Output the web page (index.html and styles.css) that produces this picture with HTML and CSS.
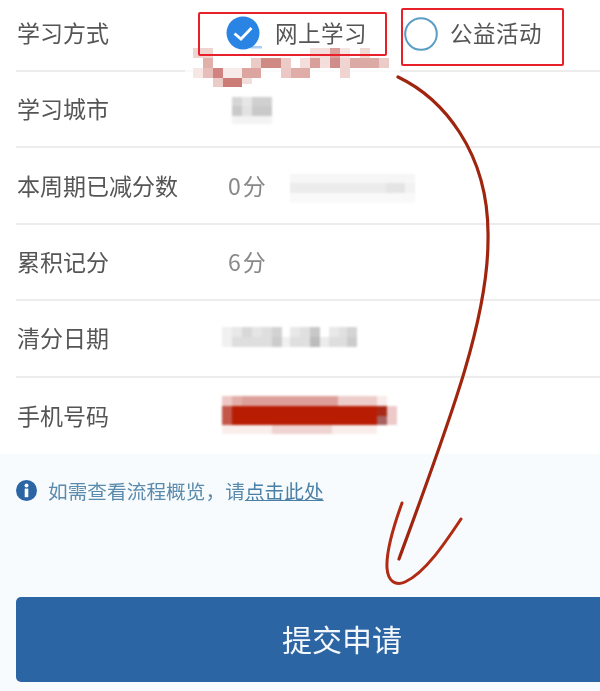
FILE: index.html
```html
<!DOCTYPE html>
<html>

<head>
    <meta charset="utf-8" />
    <title>学习方式</title>
    <meta name="viewport" content="width=device-width, initial-scale=1">
    <link rel="stylesheet" href="styles.css">
</head>

<body>
    <div class="page">
        <div class="form">
            <div class="row">
                <span class="label">学习方式</span>
                <div class="options">
                    <div class="option option-online">
                        <svg class="radio" width="34" height="34" viewBox="0 0 34 34">
                            <circle cx="17" cy="17" r="16.5" fill="#2a84e4" />
                            <path d="M8.5 17.5 L15 23 L25.5 12" fill="none" stroke="#fff" stroke-width="2.8" />
                        </svg>
                        <span class="option-text">网上学习</span>
                    </div>
                    <div class="option option-charity">
                        <svg class="radio" width="34" height="34" viewBox="0 0 34 34">
                            <circle cx="17" cy="17" r="15.8" fill="#fff" stroke="#5a9cc4" stroke-width="2" />
                        </svg>
                        <span class="option-text">公益活动</span>
                    </div>
                </div>
            </div>
            <div class="row">
                <span class="label">学习城市</span>
                <svg class="mosaic mosaic-city" width="40" height="27" viewBox="0 0 40 27">
                    <rect x="0" y="0" width="10" height="9" fill="#d6d6d6" />
                    <rect x="10" y="0" width="10" height="9" fill="#e6e6e6" />
                    <rect x="20" y="0" width="20" height="9" fill="#d0d0d0" />
                    <rect x="0" y="9" width="10" height="10" fill="#cacaca" />
                    <rect x="10" y="9" width="10" height="10" fill="#e2e2e2" />
                    <rect x="20" y="9" width="20" height="10" fill="#c9c9c9" />
                    <rect x="0" y="19" width="40" height="8" fill="#f3f3f3" />
                </svg>
            </div>
            <div class="row">
                <span class="label">本周期已减分数</span>
                <span class="value">0分</span>
                <svg class="mosaic mosaic-note" width="125" height="29" viewBox="0 0 125 29">
                    <rect x="0" y="0" width="125" height="9" fill="#f6f6f6" />
                    <rect x="0" y="9" width="125" height="10" fill="#ececec" />
                    <rect x="96" y="9" width="19" height="10" fill="#e4e4e4" />
                    <rect x="115" y="9" width="10" height="10" fill="#f2f2f2" />
                    <rect x="0" y="19" width="125" height="10" fill="#f9f9f9" />
                </svg>
            </div>
            <div class="row">
                <span class="label">累积记分</span>
                <span class="value">6分</span>
            </div>
            <div class="row">
                <span class="label">清分日期</span>
                <svg class="mosaic mosaic-date" width="135" height="20" viewBox="0 0 135 20">
                    <rect x="0" y="0" width="10" height="10" fill="#f0f0f0" />
                    <rect x="10" y="0" width="10" height="10" fill="#e8e8e8" />
                    <rect x="20" y="0" width="10" height="10" fill="#d8d8d8" />
                    <rect x="30" y="0" width="10" height="10" fill="#e5e5e5" />
                    <rect x="40" y="0" width="10" height="10" fill="#dedede" />
                    <rect x="50" y="0" width="10" height="10" fill="#d2d2d2" />
                    <rect x="68" y="0" width="10" height="10" fill="#e8e8e8" />
                    <rect x="78" y="0" width="10" height="10" fill="#e0e0e0" />
                    <rect x="88" y="0" width="10" height="10" fill="#c8c8c8" />
                    <rect x="107" y="0" width="10" height="10" fill="#e8e8e8" />
                    <rect x="117" y="0" width="10" height="10" fill="#e0e0e0" />
                    <rect x="125" y="0" width="10" height="10" fill="#d4d4d4" />
                    <rect x="0" y="10" width="10" height="10" fill="#f0f0f0" />
                    <rect x="10" y="10" width="40" height="10" fill="#dedede" />
                    <rect x="50" y="10" width="10" height="10" fill="#cccccc" />
                    <rect x="60" y="10" width="8" height="10" fill="#f0f0f0" />
                    <rect x="68" y="10" width="20" height="10" fill="#dfdfdf" />
                    <rect x="88" y="10" width="10" height="10" fill="#bcbcbc" />
                    <rect x="98" y="10" width="9" height="10" fill="#ececec" />
                    <rect x="107" y="10" width="18" height="10" fill="#dedede" />
                    <rect x="125" y="10" width="10" height="10" fill="#cccccc" />
                </svg>
            </div>
            <div class="row">
                <span class="label">手机号码</span>
                <svg class="mosaic mosaic-phone" width="175" height="38" viewBox="0 0 175 38">
                    <rect x="0" y="0" width="10" height="10" fill="#edc8c4" />
                    <rect x="10" y="0" width="10" height="10" fill="#e4aea8" />
                    <rect x="20" y="0" width="96" height="10" fill="#dd9f99" />
                    <rect x="116" y="0" width="39" height="10" fill="#eccdc9" />
                    <rect x="155" y="0" width="10" height="10" fill="#f8ecea" />
                    <rect x="0" y="10" width="10" height="19" fill="#c2574a" />
                    <rect x="10" y="10" width="145" height="19" fill="#b81c02" />
                    <rect x="155" y="10" width="10" height="10" fill="#a82a16" />
                    <rect x="155" y="20" width="10" height="9" fill="#a86060" />
                    <rect x="165" y="10" width="10" height="19" fill="#eccaca" />
                    <rect x="0" y="29" width="50" height="9" fill="#f9eeec" />
                    <rect x="50" y="29" width="60" height="9" fill="#efd4d1" />
                    <rect x="110" y="29" width="45" height="9" fill="#f9eeec" />
                </svg>
            </div>
        </div>

        <div class="footer">
            <div class="tip">
                <svg class="tip-icon" width="21" height="21" viewBox="0 0 21 21">
                    <circle cx="10.5" cy="10.5" r="10.5" fill="#2b65a4" />
                    <circle cx="10.5" cy="5.4" r="2" fill="#fff" />
                    <rect x="8.7" y="8.6" width="3.6" height="8.6" fill="#fff" />
                </svg>
                <span>如需查看流程概览，请<a class="tip-link" href="#">点击此处</a></span>
            </div>
            <button class="btn">提交申请</button>
        </div>

        <svg class="marks" width="600" height="691" viewBox="0 0 600 691">
            <rect x="185" y="67" width="215" height="9" fill="#fff" opacity="0.75" />
            <rect x="250" y="46" width="12" height="2.5" fill="#a9cdf0" />
            <rect x="193" y="48" width="20" height="10" fill="#f0d4d1" />
            <rect x="310" y="48" width="20" height="10" fill="#f3e0de" />
            <rect x="330" y="48" width="10" height="10" fill="#dba09b" />
            <rect x="340" y="48" width="10" height="10" fill="#f5e6e4" />
            <rect x="360" y="48" width="10" height="10" fill="#f0d8d5" />
            <rect x="203" y="58" width="10" height="10" fill="#e0b0ab" />
            <rect x="251" y="58" width="10" height="10" fill="#eccac6" />
            <rect x="261" y="58" width="20" height="10" fill="#d08a84" />
            <rect x="281" y="58" width="10" height="10" fill="#eccac6" />
            <rect x="300" y="58" width="10" height="10" fill="#f3dedc" />
            <rect x="310" y="58" width="10" height="10" fill="#d9a09b" />
            <rect x="320" y="58" width="10" height="10" fill="#f3dedc" />
            <rect x="330" y="58" width="10" height="10" fill="#d08c8a" />
            <rect x="340" y="58" width="10" height="10" fill="#f0d4d1" />
            <rect x="350" y="58" width="29" height="10" fill="#dcaaa5" />
            <rect x="379" y="58" width="10" height="10" fill="#ecccc8" />
            <rect x="193" y="68" width="10" height="10" fill="#f6e6e4" />
            <rect x="203" y="68" width="10" height="10" fill="#e6bdb9" />
            <rect x="213" y="68" width="10" height="10" fill="#d08380" />
            <rect x="223" y="68" width="19" height="10" fill="#f7ebe9" />
            <rect x="242" y="68" width="19" height="10" fill="#dca5a0" />
            <rect x="281" y="68" width="10" height="10" fill="#ecc8c4" />
            <rect x="291" y="68" width="19" height="10" fill="#dfaca7" />
            <rect x="340" y="68" width="10" height="10" fill="#f0d4d1" />
            <rect x="213" y="78" width="10" height="9" fill="#eccac6" />
            <rect x="223" y="78" width="19" height="9" fill="#cc7c76" />
            <rect x="242" y="78" width="10" height="6" fill="#f3dedc" />
            <path d="M398 77 C440 97 490 150 488 240 C488 320 450 420 399 559" fill="none" stroke="#a0250f" stroke-width="3.2" stroke-linecap="round" />
            <path d="M402 503 C394 525 386 550 387 568 C388 582 396 586 405 582 C425 573 445 543 461 519" fill="none" stroke="#b02a14" stroke-width="3" stroke-linecap="round" />
        </svg>
    </div>
</body>

</html>
```

FILE: styles.css
```css
html,
body {
    margin: 0;
    padding: 0;
    background: #fff;
}

.page {
    position: relative;
    width: 600px;
    height: 691px;
    overflow: hidden;
    font-family: "Noto Sans CJK SC", "Noto Sans", sans-serif;
    filter: blur(0.4px);
}

.form {
    height: 454px;
    padding-left: 16px;
}

.row {
    display: flex;
    align-items: center;
    height: 76.4px;
    box-sizing: border-box;
    padding-bottom: 2px;
    border-bottom: 2px solid #ececec;
}

.row:first-child {
    height: 72px;
    padding-bottom: 6px;
}

.row:last-child {
    border-bottom: none;
}

.label {
    width: 211px;
    margin-left: 1px;
    flex: none;
    font-size: 23px;
    color: #555;
}

.value {
    font-size: 23px;
    letter-spacing: 2px;
    color: #888;
    width: 62px;
    flex: none;
}

.options {
    display: flex;
    align-self: flex-start;
    gap: 14px;
    margin-left: -30px;
    position: relative;
    z-index: 2;
}

.option {
    display: flex;
    align-items: center;
    box-sizing: border-box;
    border: 2px solid #e8202a;
    border-radius: 2px;
    font-size: 22.5px;
    color: #555;
}

.option-text {
    letter-spacing: 0.5px;
    margin-top: -4px;
}

.option-online {
    width: 189px;
    height: 44px;
    margin-top: 12px;
    padding-left: 26px;
    gap: 15px;
}

.option-online .radio {
    margin-top: -2px;
}

.option-charity {
    width: 163px;
    height: 58px;
    margin-top: 8px;
    padding-left: 1px;
    gap: 12px;
    padding-bottom: 6px;
}

.radio {
    flex: none;
}

.mosaic {
    flex: none;
    filter: blur(0.9px);
}

.mosaic-city {
    margin-left: 4px;
    margin-top: 4px;
}

.mosaic-note {
    margin-top: 8px;
}

.mosaic-date {
    margin-left: -6px;
}

.mosaic-phone {
    margin-left: -6px;
}

.footer {
    height: 237px;
    box-sizing: border-box;
    padding: 22px 0 0 16px;
    background: #f8fbfd;
}

.tip {
    display: flex;
    align-items: center;
    gap: 11px;
    font-size: 19.7px;
    color: #5a8bad;
}

.tip-icon {
    flex: none;
}

.tip-link {
    color: #4a80a6;
    text-decoration: underline;
}

.btn {
    display: block;
    width: 652px;
    height: 85px;
    margin-top: 92px;
    padding: 0 0 3px;
    border: none;
    border-radius: 5px;
    background: #2b65a4;
    color: #f4f7fb;
    font-family: inherit;
    font-size: 30px;
}

.marks {
    position: absolute;
    left: 0;
    top: 0;
    z-index: 1;
    pointer-events: none;
}

.marks rect {
    filter: blur(0.5px);
}
```
